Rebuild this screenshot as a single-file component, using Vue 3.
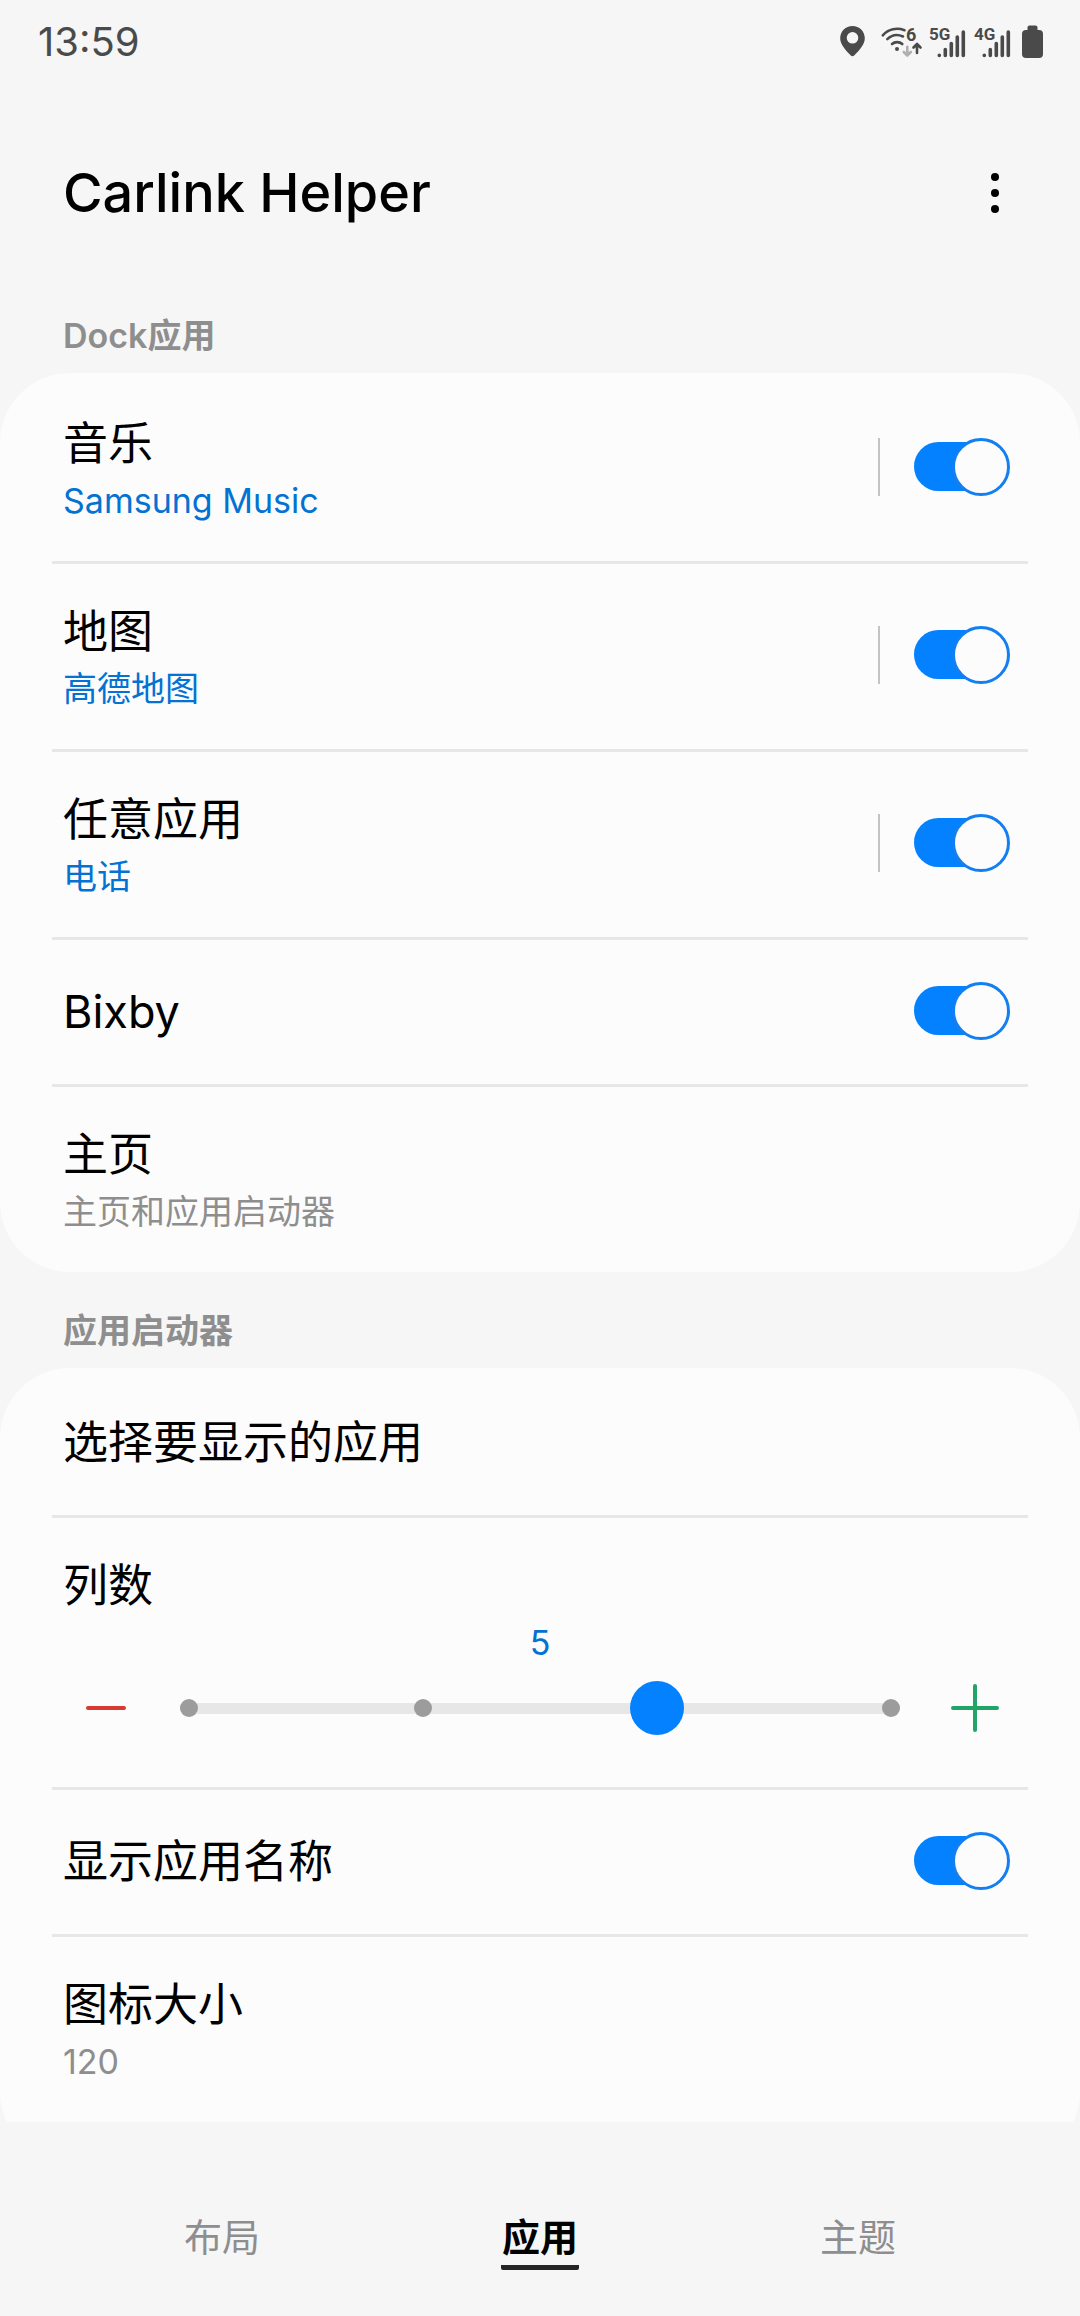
<script setup>
import { ref, reactive } from 'vue'

const dockItems = reactive([
  { id: 'music', title: '音乐', summary: 'Samsung Music', split: true, on: true },
  { id: 'map', title: '地图', summary: '高德地图', split: true, on: true },
  { id: 'any', title: '任意应用', summary: '电话', split: true, on: true },
  { id: 'bixby', title: 'Bixby', on: true },
])

const columns = ref(5)
const minColumns = 3
const maxColumns = 6
const showNames = ref(true)

const networks = ['5G', '4G']
const tabs = ['布局', '应用', '主题']
const activeTab = ref('应用')

function step(delta) {
  columns.value = Math.min(maxColumns, Math.max(minColumns, columns.value + delta))
}
</script>

<template>
  <div class="screen">
    <div class="status">
      <time class="clock">13:59</time>
      <div class="status-icons">
        <svg width="36" height="36" viewBox="0 0 36 36">
          <path fill-rule="evenodd" d="M12.5 2C5.600 2 0.200 7.300 0.200 14.200C0.200 20 5 25.500 10.800 31.500Q12.500 33 14.200 31.500C20 25.500 24.800 20 24.800 14.200C24.800 7.300 19.400 2 12.500 2ZM12.500 8a5.800 5.800 0 1 1 0 11.600a5.800 5.800 0 1 1 0-11.600Z" fill="#4a4a4a" />
        </svg>
        <svg width="44" height="36" viewBox="0 0 44 36" fill="none" stroke-width="2.600" stroke-linecap="round" stroke-linejoin="round">
          <g stroke="#4a4a4a">
            <path d="M2.800 11.300C8.500 4.800 17 3.400 24.500 6.200" />
            <path d="M7.300 15.200C11.500 11 17.500 10 23 12.500" />
            <path d="M12 20C14.800 17.500 19.500 17.500 22.300 20" />
            <path d="M37 29V20M33.500 23.500L37 20L40.500 23.500" />
          </g>
          <path stroke="#b0b0b0" d="M27.300 22.800V31.500M23.800 28L27.300 31.500L30.800 28" />
          <circle cx="17" cy="25" r="2" fill="#4a4a4a" />
          <text class="net wifi" x="26" y="17">6</text>
        </svg>
        <svg v-for="net in networks" :key="net" width="41" height="36" viewBox="0 0 41 36">
          <text class="net" x="1" y="16">{{ net }}</text>
          <g stroke="#4a4a4a" stroke-width="3.600" stroke-linecap="round">
            <path d="M11.300 31.500V31.300M17.300 31.500V25.500M23.300 31.500V19.500M29.300 31.500V13M35.300 31.500V8" />
          </g>
        </svg>
        <svg width="26" height="36" viewBox="0 0 26 36" fill="#4a4a4a">
          <rect x="4" y="6" width="21" height="28" rx="4" />
          <rect x="9.500" y="1.500" width="10" height="8" rx="2" />
        </svg>
      </div>
    </div>

    <header class="header">
      <h1>Carlink Helper</h1>
      <button class="more" type="button" aria-label="更多选项">
        <svg width="10" height="42" viewBox="0 0 10 42">
          <circle cx="5" cy="5" r="4" />
          <circle cx="5" cy="21" r="4" />
          <circle cx="5" cy="37" r="4" />
        </svg>
      </button>
    </header>

    <main class="content">
      <h2>Dock应用</h2>
      <ul class="card">
        <li v-for="item in dockItems" :key="item.id" class="item" :class="{ tall: item.summary }">
          <label class="text" :for="item.id">
            <span class="title">{{ item.title }}</span>
            <span v-if="item.summary" class="summary accent">{{ item.summary }}</span>
          </label>
          <span v-if="item.split" class="split"></span>
          <input :id="item.id" v-model="item.on" class="switch" type="checkbox" />
        </li>
        <li class="item tall">
          <div class="text">
            <span class="title">主页</span>
            <span class="summary">主页和应用启动器</span>
          </div>
        </li>
      </ul>

      <h2>应用启动器</h2>
      <ul class="card last">
        <li class="item">
          <div class="text"><span class="title">选择要显示的应用</span></div>
        </li>
        <li class="item slider-item">
          <label class="title" for="columns">列数</label>
          <output class="summary accent value" for="columns">{{ columns }}</output>
          <div class="slider-row">
            <button class="step" type="button" aria-label="减少" @click="step(-1)">
              <svg width="50" height="50" viewBox="0 0 50 50">
                <path d="M7 25H43" stroke="#d63a33" stroke-width="4" stroke-linecap="round" />
              </svg>
            </button>
            <div class="slider">
              <div class="track">
                <i v-for="n in maxColumns - minColumns + 1" :key="n" class="tick"></i>
              </div>
              <input id="columns" v-model.number="columns" type="range" :min="minColumns" :max="maxColumns" step="1" />
            </div>
            <button class="step" type="button" aria-label="增加" @click="step(1)">
              <svg width="50" height="50" viewBox="0 0 50 50">
                <path d="M3 25H47M25 3V47" stroke="#20a566" stroke-width="4" stroke-linecap="round" />
              </svg>
            </button>
          </div>
        </li>
        <li class="item">
          <label class="text" for="names"><span class="title">显示应用名称</span></label>
          <input id="names" v-model="showNames" class="switch" type="checkbox" />
        </li>
        <li class="item tall">
          <div class="text">
            <span class="title">图标大小</span>
            <span class="summary">120</span>
          </div>
        </li>
      </ul>
    </main>

    <nav class="tabs">
      <button
        v-for="tab in tabs"
        :key="tab"
        class="tab"
        :class="{ active: tab === activeTab }"
        type="button"
        @click="activeTab = tab"
      >
        <span>{{ tab }}</span>
      </button>
    </nav>
  </div>
</template>

<style>
body {
  margin: 0;
  background: #f6f6f6;
}
</style>

<style scoped>
* {
  box-sizing: border-box;
}

.screen {
  display: flex;
  flex-direction: column;
  height: 100vh;
  background: #f6f6f6;
  color: #000;
  font-family: Inter, "Noto Sans CJK SC", sans-serif;
}

button {
  margin: 0;
  padding: 0;
  border: 0;
  background: none;
  font: inherit;
}

.status {
  display: flex;
  flex: none;
  align-items: center;
  justify-content: space-between;
  height: 84px;
  padding: 0 36px 0 38px;
}

.clock {
  color: #4a4a4a;
  font-size: 40px;
  line-height: 48px;
}

.status-icons {
  display: flex;
  gap: 4px;
}

.net {
  fill: #4a4a4a;
  stroke: none;
  font: 700 17px Roboto, sans-serif;
}

.net.wifi {
  font-size: 18px;
}

.header {
  display: flex;
  flex: none;
  align-items: center;
  justify-content: space-between;
  height: 193px;
  padding: 24px 63px 0;
}

h1 {
  margin: 0;
  font-size: 54px;
  font-weight: 500;
  line-height: 66px;
}

.more {
  display: flex;
  justify-content: center;
  width: 44px;
}

.content {
  flex: 1;
  min-height: 0;
  overflow: hidden;
}

h2 {
  margin: 0;
  padding: 22px 63px 0;
  color: #8e8e8e;
  font-size: 34px;
  font-weight: 600;
  line-height: 74px;
}

.card {
  margin: 0;
  padding: 0 52px;
  border-radius: 70px;
  background: #fcfcfc;
  list-style: none;
}

.card.last {
  padding-bottom: 40px;
}

.item {
  display: flex;
  align-items: center;
  min-height: 147px;
  padding: 0 12px 3px 11px;
  border-top: 3px solid #e7e7e7;
}

.item:first-child {
  border-top-color: transparent;
}

.item.tall {
  min-height: 188px;
}

.text {
  display: flex;
  flex: 1;
  flex-direction: column;
  padding-top: 2px;
}

.title {
  font-size: 45px;
  line-height: 66px;
}

.summary {
  color: #8e8e8e;
  font-size: 34px;
  line-height: 48px;
}

.summary.accent {
  color: #0472d2;
}

.split {
  width: 2px;
  height: 58px;
  margin-right: 34px;
  background: #c4c4c4;
}

.switch {
  position: relative;
  flex: none;
  appearance: none;
  width: 96px;
  height: 58px;
  margin: 0 6px 0 0;
}

.switch::before {
  position: absolute;
  inset: 4px 4px 5px 0;
  border-radius: 25px;
  background: #a0a0a0;
  content: "";
}

.switch::after {
  position: absolute;
  top: 0;
  left: 0;
  box-sizing: border-box;
  width: 58px;
  height: 58px;
  border: 3px solid #8e8e8e;
  border-radius: 50%;
  background: #fcfcfc;
  content: "";
}

.switch:checked::before {
  background: #0381fe;
}

.switch:checked::after {
  right: 0;
  left: auto;
  border-color: #147ff0;
}

.slider-item {
  flex-direction: column;
  align-items: stretch;
  padding: 35px 11px 52px;
}

.value {
  text-align: center;
}

.slider-row {
  display: flex;
  align-items: center;
  gap: 14px;
  margin-top: 14px;
}

.step {
  display: flex;
  flex: none;
  align-items: center;
  justify-content: center;
  width: 85px;
}

.slider {
  display: grid;
  flex: 1;
  align-items: center;
}

.slider > * {
  grid-area: 1 / 1;
}

.track {
  display: flex;
  align-items: center;
  justify-content: space-between;
  height: 11px;
  margin: 0 18px;
  border-radius: 6px;
  background: #e7e7e7;
}

.tick {
  width: 18px;
  height: 18px;
  border-radius: 50%;
  background: #9c9c9c;
}

input[type="range"] {
  appearance: none;
  width: 100%;
  height: 54px;
  margin: 0;
  background: transparent;
}

input[type="range"]::-webkit-slider-thumb {
  appearance: none;
  width: 54px;
  height: 54px;
  border-radius: 50%;
  background: #0381fe;
}

.tabs {
  display: flex;
  flex: none;
  align-items: flex-end;
  height: 194px;
  padding: 0 63px 46px;
}

.tab {
  display: flex;
  flex: 1;
  justify-content: center;
  color: #8e8e8e;
  font-size: 38px;
  line-height: 56px;
}

.tab span {
  padding: 0 1px;
  border-bottom: 5px solid transparent;
  border-radius: 2px;
}

.tab.active {
  color: #000;
  font-weight: 700;
}

.tab.active span {
  border-bottom-color: #252525;
}
</style>
